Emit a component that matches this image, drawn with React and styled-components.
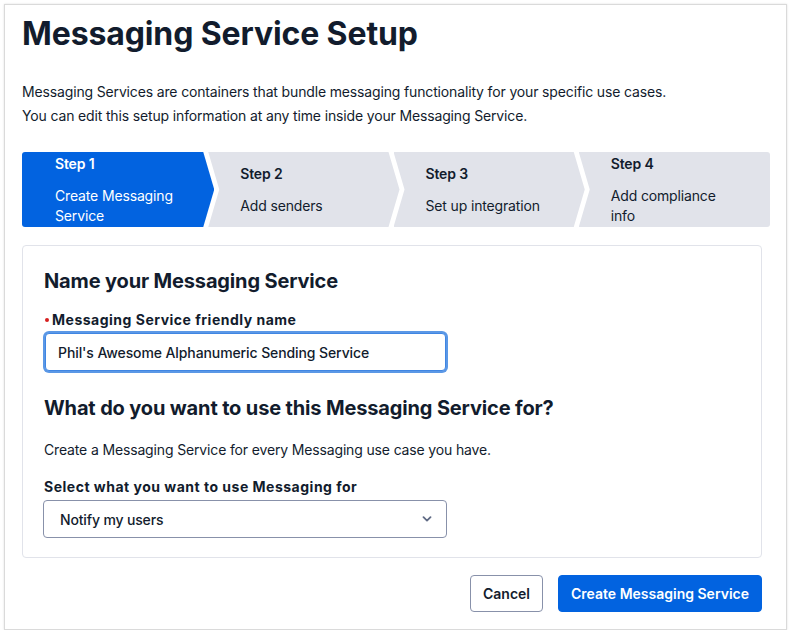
import styled, { createGlobalStyle } from 'styled-components'

const GlobalStyle = createGlobalStyle`
  body {
    margin: 0;
    background: #ffffff;
    font-family: Inter, "Noto Sans", "Liberation Sans", sans-serif;
    color: #121c2d;
    letter-spacing: -0.15px;
  }
`

const Frame = styled.div`
  box-sizing: border-box;
  margin: 4px 0 0 4px;
  width: 783px;
  height: 626px;
  border: 1px solid #dadada;
  box-shadow: 0 0 2px rgba(0, 0, 0, 0.12);
  padding: 7px 16px 0 17px;
`

const Title = styled.h1`
  margin: 0;
  font-size: 32px;
  line-height: 44px;
  font-weight: 700;
  letter-spacing: -0.12px;
  color: #121c2d;
`

const Intro = styled.p`
  margin: 24px 0 0;
  font-size: 14px;
  line-height: 24px;
`

const Stepper = styled.ol`
  list-style: none;
  margin: 24px 0 0;
  padding: 0;
  display: flex;
  width: 748px;
  height: 75px;
  border-radius: 3px;
  overflow: hidden;
`

const arrows = {
  first: 'polygon(0 0, calc(100% - 11px) 0, 100% 50%, calc(100% - 11px) 100%, 0 100%)',
  middle: 'polygon(0 0, calc(100% - 11px) 0, 100% 50%, calc(100% - 11px) 100%, 0 100%, 11px 50%)',
  last: 'polygon(0 0, 100% 0, 100% 100%, 0 100%, 11px 50%)',
}

const Step = styled.li`
  flex: 1;
  box-sizing: border-box;
  display: flex;
  flex-direction: column;
  justify-content: center;
  gap: 12px;
  padding: 0 36px 0 ${p => (p.$pos === 'first' ? 33 : 32)}px;
  margin-left: ${p => (p.$pos === 'first' ? 0 : -6)}px;
  background: ${p => (p.$active ? '#0263e0' : '#e1e3ea')};
  color: ${p => (p.$active ? '#ffffff' : '#121c2d')};
  clip-path: ${p => arrows[p.$pos]};
  font-size: 14px;
  line-height: 20px;
`

const StepTitle = styled.span`
  font-weight: 600;
`

const StepText = styled.span`
  font-weight: 400;
`

const Card = styled.section`
  box-sizing: border-box;
  width: 740px;
  margin-top: 18px;
  border: 1px solid #e1e3ea;
  border-radius: 4px;
  padding: 21px 21px 19px;
`

const Heading = styled.h2`
  margin: ${p => (p.$spaced ? '23px' : '0')} 0 0;
  font-size: 20px;
  line-height: 28px;
  font-weight: 700;
  letter-spacing: -0.15px;
`

const Label = styled.label`
  display: flex;
  align-items: center;
  gap: 3px;
  margin: ${p => p.$top}px 0 3px;
  font-size: 14px;
  line-height: 20px;
  font-weight: 700;
  letter-spacing: 0.5px;
`

const Required = styled.span`
  width: 4px;
  height: 4px;
  margin-left: 1px;
  border-radius: 50%;
  background: #d61f1f;
`

const TextInput = styled.input`
  box-sizing: border-box;
  display: block;
  width: 401px;
  height: 38px;
  margin-left: 1px;
  padding: 0 12px;
  border: 1px solid #3f86e3;
  border-radius: 4px;
  box-shadow: 0 0 0 2px #5b98e6;
  outline: none;
  font-family: inherit;
  font-size: 14px;
  font-weight: 500;
  letter-spacing: -0.1px;
  color: #121c2d;
`

const Help = styled.p`
  margin: 16px 0 0;
  font-size: 14px;
  line-height: 24px;
`

const Select = styled.div`
  box-sizing: border-box;
  width: 404px;
  height: 38px;
  margin-left: -1px;
  display: flex;
  align-items: center;
  justify-content: space-between;
  padding: 0 14px 0 16px;
  border: 1px solid #8891aa;
  border-radius: 4px;
  font-size: 14px;
  font-weight: 500;
`

const Actions = styled.div`
  width: 740px;
  display: flex;
  justify-content: flex-end;
  gap: 15px;
  margin-top: 17px;
`

const Button = styled.button`
  box-sizing: border-box;
  height: 37px;
  padding: 0 12px;
  border-radius: 4px;
  border: 1px solid ${p => (p.$primary ? '#0263e0' : '#8891aa')};
  background: ${p => (p.$primary ? '#0263e0' : '#ffffff')};
  color: ${p => (p.$primary ? '#ffffff' : '#121c2d')};
  font-family: inherit;
  font-size: 14px;
  font-weight: 600;
`

const steps = [
  { title: 'Step 1', text: 'Create Messaging Service', pos: 'first', active: true },
  { title: 'Step 2', text: 'Add senders', pos: 'middle' },
  { title: 'Step 3', text: 'Set up integration', pos: 'middle' },
  { title: 'Step 4', text: 'Add compliance info', pos: 'last' },
]

function Chevron() {
  return (
    <svg width="10" height="6" viewBox="0 0 10 6" fill="none">
      <path d="M1.5 1.2 5 4.6 8.5 1.2" stroke="#606b85" strokeWidth="1.8" strokeLinecap="round" strokeLinejoin="round" />
    </svg>
  )
}

export default function App() {
  return (
    <>
      <GlobalStyle />
      <Frame>
        <Title>Messaging Service Setup</Title>
        <Intro>
          Messaging Services are containers that bundle messaging functionality for your specific use cases.
          <br />
          You can edit this setup information at any time inside your Messaging Service.
        </Intro>
        <Stepper>
          {steps.map(s => (
            <Step key={s.title} $pos={s.pos} $active={s.active}>
              <StepTitle>{s.title}</StepTitle>
              <StepText>{s.text}</StepText>
            </Step>
          ))}
        </Stepper>
        <Card>
          <Heading>Name your Messaging Service</Heading>
          <Label $top={15}>
            <Required />
            Messaging Service friendly name
          </Label>
          <TextInput defaultValue="Phil's Awesome Alphanumeric Sending Service" />
          <Heading $spaced>What do you want to use this Messaging Service for?</Heading>
          <Help>Create a Messaging Service for every Messaging use case you have.</Help>
          <Label $top={15}>Select what you want to use Messaging for</Label>
          <Select>
            Notify my users
            <Chevron />
          </Select>
        </Card>
        <Actions>
          <Button>Cancel</Button>
          <Button $primary>Create Messaging Service</Button>
        </Actions>
      </Frame>
    </>
  )
}
